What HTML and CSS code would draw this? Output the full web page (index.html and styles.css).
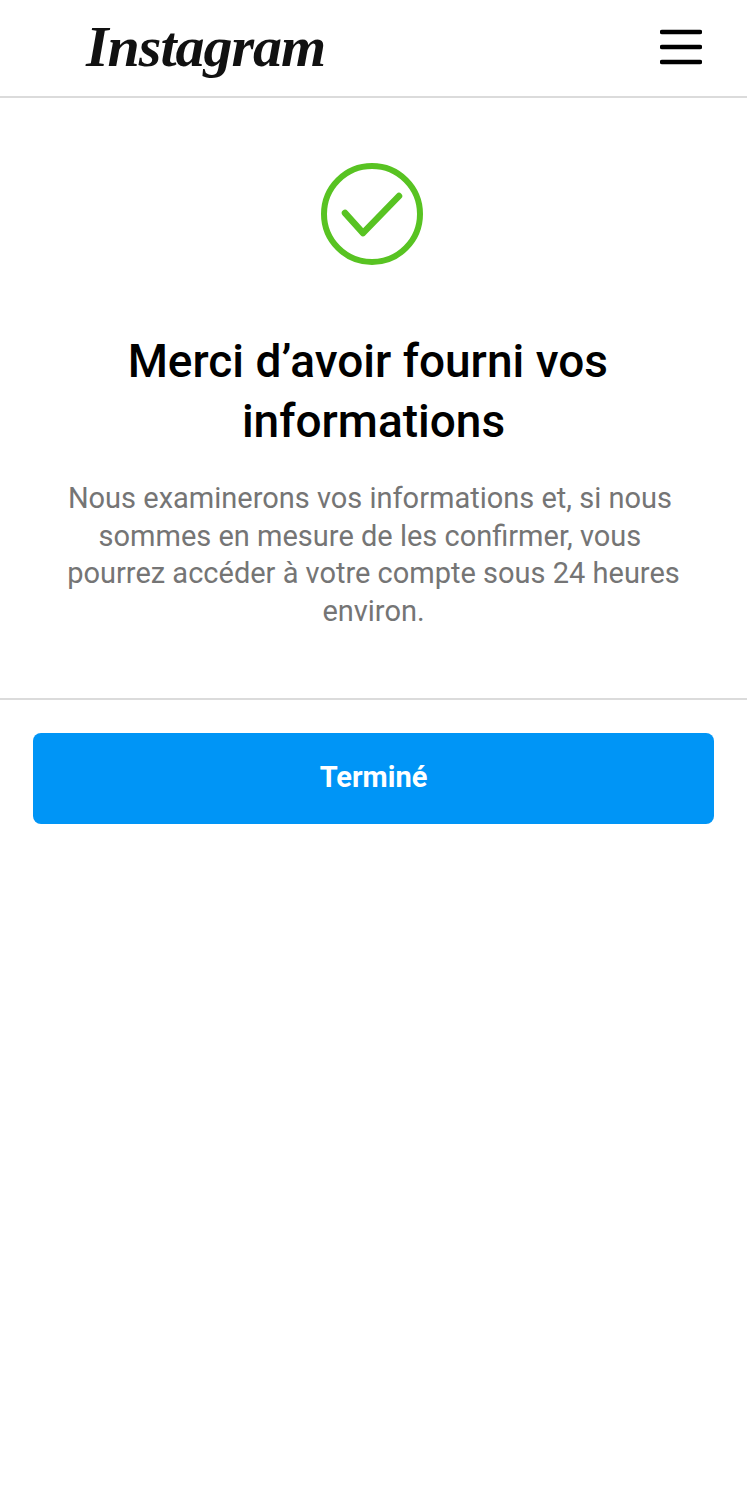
FILE: index.html
```html
<!DOCTYPE html>
<html lang="fr">
<head>
    <meta charset="UTF-8">
    <meta name="viewport" content="width=device-width, initial-scale=1.0">
    <title>Instagram</title>
    <link rel="stylesheet" href="styles.css">
</head>
<body>
    <header class="topbar">
        <span class="logo">Instagram</span>
        <svg class="menu-icon" width="42" height="36" viewBox="0 0 42 36" aria-label="Menu">
            <path d="M2 3h38M2 18h38M2 33h38" fill="none" stroke="#000" stroke-width="4.500" stroke-linecap="round"/>
        </svg>
    </header>

    <section class="message">
        <svg class="check-icon" width="104" height="104" viewBox="0 0 104 104" aria-hidden="true">
            <circle cx="52" cy="52" r="48" fill="none" stroke="#58c322" stroke-width="6"/>
            <path d="M25 51l18 20 36-37" fill="none" stroke="#58c322" stroke-width="6.500" stroke-linecap="round" stroke-linejoin="round"/>
        </svg>
        <h1>Merci d’avoir fourni vos&nbsp;<br>informations</h1>
        <p>Nous examinerons vos informations et, si nous&nbsp;<br>sommes en mesure de les confirmer, vous&nbsp;<br>pourrez accéder à votre compte sous 24 heures<br>environ.</p>
    </section>

    <div class="actions">
        <button type="button">Terminé</button>
    </div>
</body>
</html>
```

FILE: styles.css
```css
body, h1, p, button {
    margin: 0;
    padding: 0;
    box-sizing: border-box;
}

body {
    font-family: Roboto, "Liberation Sans", sans-serif;
    background: #fff;
    color: #000;
}

.topbar {
    display: flex;
    align-items: center;
    justify-content: space-between;
    height: 98px;
    padding: 0 45px 2px 86px;
    box-sizing: border-box;
    border-bottom: 2px solid #dbdbdb;
}

.logo {
    font-family: "Liberation Serif", serif;
    font-style: italic;
    font-weight: bold;
    font-size: 58px;
    line-height: 1;
    letter-spacing: -1px;
    color: #111;
}

.menu-icon {
    display: block;
}

.message {
    display: flex;
    flex-direction: column;
    align-items: center;
    height: 602px;
    padding-top: 64px;
    box-sizing: border-box;
    border-bottom: 2px solid #dbdbdb;
    text-align: center;
}

.check-icon {
    display: block;
    margin-left: -3px;
}

.message h1 {
    width: 520px;
    margin-top: 65px;
    font-size: 46px;
    font-weight: 500;
    line-height: 60px;
}

.message p {
    width: 640px;
    margin-top: 29px;
    font-size: 29px;
    line-height: 37.500px;
    color: #757575;
}

.actions {
    padding: 33px 33px 0;
}

button {
    display: block;
    width: 100%;
    height: 91px;
    border: none;
    border-radius: 8px;
    background-color: #0095f6;
    color: #fff;
    font-family: inherit;
    font-size: 29px;
    font-weight: 700;
    padding-bottom: 4px;
}
```
